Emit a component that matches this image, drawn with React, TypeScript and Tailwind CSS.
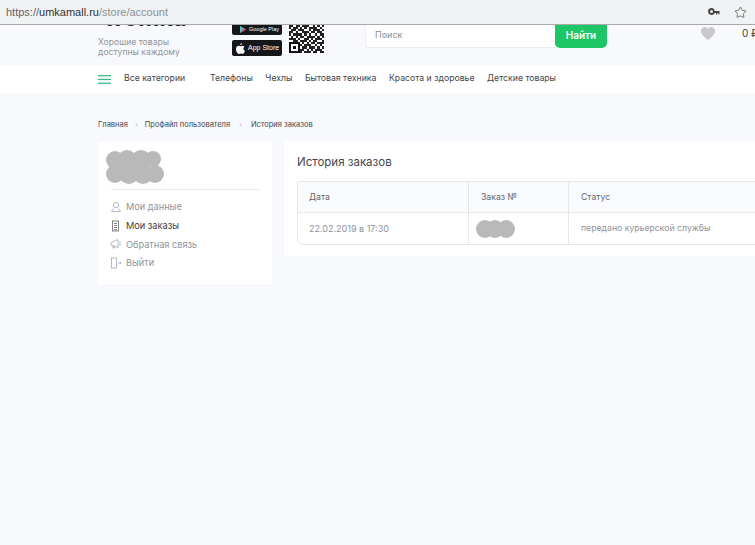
import { Star } from "lucide-react";

const qr = [
  "1110101101011011",
  "1010111010110101",
  "0111010011101110",
  "1101101110010101",
  "1011010101111010",
  "0110111001011101",
  "1101001110110110",
  "1011110101001011",
  "0101011011110101",
  "1110100110101110",
  "0011011101011001",
  "1111101010110111",
  "1001010111001010",
  "1011101101110101",
  "1001011010101110",
  "1111010111011011",
];

function QR() {
  return (
    <svg width="35" height="35" viewBox="0 0 32 32" className="shrink-0" shapeRendering="crispEdges">
      {qr.map((r, y) =>
        [...r].map((c, x) => (c === "1" ? <rect key={x + "-" + y} x={x * 2} y={y * 2} width="2" height="2" fill="#222" /> : null))
      )}
      <rect x="0" y="22" width="10" height="10" fill="#111" />
      <rect x="2" y="24" width="6" height="6" fill="#fff" />
      <rect x="4" y="26" width="2" height="2" fill="#111" />
    </svg>
  );
}

function Blob({ w, h, circles }: { w: number; h: number; circles: number[][] }) {
  return (
    <svg width={w} height={h} viewBox={`0 0 ${w} ${h}`} className="block">
      {circles.map((c, i) => (
        <circle key={i} cx={c[0]} cy={c[1]} r={c[2]} fill="#b9b9b9" />
      ))}
    </svg>
  );
}

const UserIcon = () => (
  <svg width="12" height="12" viewBox="0 0 12 12" fill="none" stroke="#a4a8ae" strokeWidth="0.8">
    <circle cx="6" cy="4" r="2.6" />
    <path d="M3.500 7.500 L1.500 10.500 H10.500 L8.500 7.500" />
  </svg>
);
const OrdersIcon = () => (
  <svg width="12" height="12" viewBox="0 0 12 12" fill="none" stroke="#777" strokeWidth="0.9">
    <rect x="2.500" y="1" width="6" height="10" />
    <path d="M4 3.500h3M4 5.500h3M4 7.500h3M4 9.500h3" />
  </svg>
);
const HornIcon = () => (
  <svg width="12" height="12" viewBox="0 0 12 12" fill="none" stroke="#a4a8ae" strokeWidth="0.8">
    <path d="M1 4.500 L8 1.500 V9.500 L1 7 Z M3 7.500 V10 H4.500 V8.200 M10 3.500 V8" />
  </svg>
);
const ExitIcon = () => (
  <svg width="12" height="12" viewBox="0 0 12 12" fill="none" stroke="#a4a8ae" strokeWidth="0.8">
    <rect x="1.500" y="1" width="5" height="10" />
    <path d="M8 6h3M10 5l1 1-1 1" />
  </svg>
);

const side = [
  { t: "Мои данные", i: <UserIcon />, c: "text-[#8f939b]" },
  { t: "Мои заказы", i: <OrdersIcon />, c: "text-[#3a3d42]" },
  { t: "Обратная связь", i: <HornIcon />, c: "text-[#8f939b]" },
  { t: "Выйти", i: <ExitIcon />, c: "text-[#8f939b]" },
];

const nav = ["Телефоны", "Чехлы", "Бытовая техника", "Красота и здоровье", "Детские товары"];

export default function App() {
  return (
    <div className="w-[755px] h-[545px] overflow-hidden bg-[#f8f9fc] flex flex-col font-['Inter',sans-serif]">
      {/* browser bar */}
      <div className="h-[25px] shrink-0 bg-[#f1f2f4] border-b border-[#a9a9a9] flex items-center pl-[6px] pr-[8px] font-['Liberation_Sans',sans-serif] text-[11px]">
        <span className="text-[#5f6368]">https://</span>
        <span className="text-[#303236]">umkamall.ru</span>
        <span className="text-[#8b9095]">/store/account</span>
        <div className="ml-auto flex items-center gap-[14px] text-[#444]">
          <svg width="12" height="8" viewBox="0 0 12 8" fill="#444">
            <path d="M3.500 0a3.500 3.500 0 1 0 3.200 5H8v1.500h1.300V5h.9v1.200H11.500V3H6.700A3.500 3.500 0 0 0 3.500 0Zm0 2a1.500 1.500 0 1 1 0 3 1.500 1.500 0 0 1 0-3Z" />
          </svg>
          <Star size={13} strokeWidth={1.3} color="#444" />
        </div>
      </div>

      {/* header */}
      <div className="h-[40px] shrink-0 overflow-hidden flex pl-[98px]">
        <div className="w-[134px] shrink-0">
          <div className="h-[11px] overflow-hidden">
            <div className="-mt-[20px] ml-[6px] text-[23px] leading-[26px] font-bold text-[#1c1f24] tracking-[0.4px]">womka</div>
          </div>
          <div className="mt-[1px] text-[8.6px] leading-[10px] text-[#8f939b]">
            Хорошие товары
            <br />
            доступны каждому
          </div>
        </div>
        <div className="w-[133px] shrink-0 flex gap-[7px]">
          <div className="w-[50px] -mt-[1px] flex flex-col gap-[5px]">
            <div className="h-[11px] bg-[#16171a] rounded-[2px] flex items-center justify-end pr-[3px] text-white text-[5.5px] font-['Liberation_Sans',sans-serif]">
              <svg width="6" height="7" viewBox="0 0 6 7" className="mr-[3px]">
                <path d="M0 0 L6 3.500 L0 7 Z" fill="#4fc3c9" />
                <path d="M0 7 L6 3.500 L3.500 2 Z" fill="#e8505b" />
              </svg>
              Google Play
            </div>
            <div className="h-[16px] bg-[#16171a] rounded-[2px] flex items-center pl-[4px] gap-[3px] text-white font-['Liberation_Sans',sans-serif]">
              <svg width="9" height="11" viewBox="0 0 9 11" fill="#fff">
                <path d="M6.100 0c.1.800-.7 2-1.900 2 0-.9.800-1.900 1.900-2ZM7.400 5.600c0-1 .7-1.500 1.100-1.800-.6-.8-1.500-1-1.900-1-.8 0-1.400.5-1.900.5s-1.100-.5-1.900-.5C1.500 2.800 0 3.900 0 6c0 2.400 1.700 5 3 5 .6 0 .9-.4 1.700-.4s1 .4 1.700.4c1.100 0 2.200-2 2.500-3-.7-.3-1.500-1-1.500-2.400Z" />
              </svg>
              <span className="text-[7px] leading-[16px]">App Store</span>
            </div>
          </div>
          <div className="-mt-[7px]">
            <QR />
          </div>
        </div>
        <div className="w-[190px] h-[23px] shrink-0 bg-white border-b border-l border-[#eceef1] rounded-bl-[3px] pl-[9px] pb-[2px] flex items-center text-[9px] text-[#8a8e96]">
          Поиск
        </div>
        <div className="w-[52px] h-[23px] shrink-0 bg-[#1ec665] rounded-b-[5px] pb-[2px] flex items-center justify-center text-white text-[10px] font-semibold">
          Найти
        </div>
        <svg width="14" height="13" viewBox="0 0 14 13" className="ml-[94px] mt-[2px] shrink-0">
          <path d="M7 13 C3 10 0 7.500 0 4 C0 1.500 2 0 3.800 0 C5.200 0 6.300.8 7 2 C7.700.8 8.800 0 10.200 0 C12 0 14 1.500 14 4 C14 7.500 11 10 7 13 Z" fill="#c9c9cc" />
        </svg>
        <div className="ml-[27px] mt-[2px] text-[10px] leading-[12px] text-[#3a3d42] whitespace-nowrap">0 ₽</div>
      </div>

      {/* nav */}
      <div className="h-[28px] shrink-0 bg-white flex items-center pl-[98px] text-[8.7px] text-[#43464c]">
        <svg width="13" height="9" viewBox="0 0 13 9" className="shrink-0">
          <rect y="0" width="13" height="1.300" fill="#37bf8a" />
          <rect y="3.800" width="13" height="1.300" fill="#37bf8a" />
          <rect y="7.600" width="13" height="1.300" fill="#37bf8a" />
        </svg>
        <span className="ml-[13px] w-[86px]">Все категории</span>
        <div className="flex gap-[12.5px]">
          {nav.map((n) => (
            <span key={n} className="whitespace-nowrap">{n}</span>
          ))}
        </div>
      </div>

      {/* page */}
      <div className="pl-[98px] pt-[27px]">
        <div className="flex items-center h-[10px] text-[7.5px] text-[#43464c]">
          <span>Главная</span>
          <span className="mx-[7px] text-[#b9bcc2]">›</span>
          <span>Профайл пользователя</span>
          <span className="mx-[9px] text-[#b9bcc2]">›</span>
          <span>История заказов</span>
        </div>

        <div className="flex items-start gap-[12px] mt-[12px]">
          {/* sidebar */}
          <div className="w-[174px] h-[142px] shrink-0 bg-white pl-[7px] pr-[8px] pt-[8px]">
            <Blob
              w={60}
              h={34}
              circles={[
                [10, 10, 9], [22, 10, 10], [36, 10, 10], [48, 9, 8],
                [10, 24, 9], [24, 24, 10], [38, 24, 10], [50, 24, 9],
              ]}
            />
            <div className="h-px bg-[#e8e9ec] ml-[6px] mr-[5px] mt-[5px]" />
            <div className="mt-[8px] pl-[5px] flex flex-col">
              {side.map((s) => (
                <div key={s.t} className={`h-[18.6px] flex items-center gap-[4px] text-[9.2px] ${s.c}`}>
                  {s.i}
                  <span>{s.t}</span>
                </div>
              ))}
            </div>
          </div>

          {/* main */}
          <div className="w-[480px] h-[114px] shrink-0 bg-white pl-[13px] pt-[13px]">
            <div className="text-[11.5px] leading-[14px] text-[#43464c]">История заказов</div>
            <div className="mt-[12px] border border-[#e6e7ea] rounded-bl-[6px] text-[8.7px]">
              <div className="grid grid-cols-[171px_100px_1fr] h-[31px] bg-[#fafbfc] border-b border-[#e6e7ea] text-[#62666d]">
                <div className="flex items-center pl-[11px] pt-[1px] border-r border-[#e6e7ea]">Дата</div>
                <div className="flex items-center pl-[12px] pt-[1px] border-r border-[#e6e7ea]">Заказ №</div>
                <div className="flex items-center pl-[12px] pt-[1px]">Статус</div>
              </div>
              <div className="grid grid-cols-[171px_100px_1fr] h-[31px] text-[#8f939b]">
                <div className="flex items-center pl-[11px] border-r border-[#e6e7ea] text-[9px]">22.02.2019 в 17:30</div>
                <div className="flex items-center pl-[7px] border-r border-[#e6e7ea]">
                  <Blob w={39} h={18} circles={[[9, 9, 9], [19, 9, 9], [30, 9, 9]]} />
                </div>
                <div className="flex items-center pl-[12px]">передано курьерской службы</div>
              </div>
            </div>
          </div>
        </div>
      </div>
    </div>
  );
}
